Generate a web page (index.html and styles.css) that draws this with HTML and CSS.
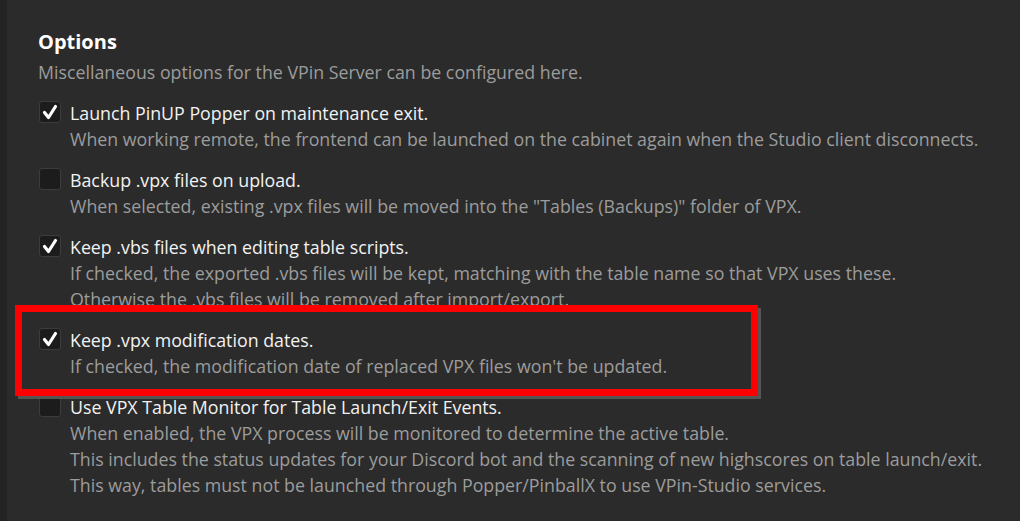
FILE: index.html
```html
<!DOCTYPE html>
<html>
<head>
<meta charset="utf-8">
<link rel="stylesheet" href="styles.css">
</head>
<body>
<div class="page">
  <div class="strip"></div>
  <div class="content">
    <h1 class="title">Options</h1>
    <p class="subtitle">Miscellaneous options for the VPin Server can be configured here.</p>
    <div class="options">
      <div class="option">
        <span class="check checked"><svg viewBox="0 0 22 22" width="22" height="22"><path d="M5.5 11.5 L9.5 16.5 L16.5 5.5" fill="none" stroke="#fff" stroke-width="3.2" stroke-linecap="round" stroke-linejoin="round"/></svg></span>
        <div class="text">
          <div class="label">Launch PinUP Popper on maintenance exit.</div>
          <div class="desc">When working remote, the frontend can be launched on the cabinet again when the Studio client disconnects.</div>
        </div>
      </div>
      <div class="option">
        <span class="check"></span>
        <div class="text">
          <div class="label">Backup .vpx files on upload.</div>
          <div class="desc">When selected, existing .vpx files will be moved into the "Tables (Backups)" folder of VPX.</div>
        </div>
      </div>
      <div class="option">
        <span class="check checked"><svg viewBox="0 0 22 22" width="22" height="22"><path d="M5.5 11.5 L9.5 16.5 L16.5 5.5" fill="none" stroke="#fff" stroke-width="3.2" stroke-linecap="round" stroke-linejoin="round"/></svg></span>
        <div class="text">
          <div class="label">Keep .vbs files when editing table scripts.</div>
          <div class="desc">If checked, the exported .vbs files will be kept, matching with the table name so that VPX uses these.</div>
          <div class="desc">Otherwise the .vbs files will be removed after import/export.</div>
        </div>
      </div>
      <div class="option">
        <span class="check checked"><svg viewBox="0 0 22 22" width="22" height="22"><path d="M5.5 11.5 L9.5 16.5 L16.5 5.5" fill="none" stroke="#fff" stroke-width="3.2" stroke-linecap="round" stroke-linejoin="round"/></svg></span>
        <div class="text">
          <div class="label">Keep .vpx modification dates.</div>
          <div class="desc">If checked, the modification date of replaced VPX files won't be updated.</div>
        </div>
      </div>
      <div class="option">
        <span class="check"></span>
        <div class="text">
          <div class="label">Use VPX Table Monitor for Table Launch/Exit Events.</div>
          <div class="desc">When enabled, the VPX process will be monitored to determine the active table.</div>
          <div class="desc">This includes the status updates for your Discord bot and the scanning of new highscores on table launch/exit.</div>
          <div class="desc">This way, tables must not be launched through Popper/PinballX to use VPin-Studio services.</div>
        </div>
      </div>
    </div>
  </div>
  <div class="highlight"></div>
</div>
</body>
</html>
```

FILE: styles.css
```css
* { box-sizing: border-box; }
html, body { margin: 0; padding: 0; }
body {
  background: #2b2b2b;
  font-family: "Open Sans", "Noto Sans", sans-serif;
  overflow: hidden;
}
.page {
  position: relative;
  display: flex;
  height: 521px;
}
.strip {
  width: 7px;
  background: #232323;
  flex: none;
}
.content {
  padding: 29px 0 0 31px;
}
.title {
  margin: 0;
  font-size: 20px;
  font-weight: 700;
  color: #ffffff;
  line-height: 26px;
}
.subtitle {
  margin: 4px 0 0;
  font-size: 17.8px;
  line-height: 26px;
  color: #9c9c9c;
}
.options {
  margin-top: 15px;
  display: flex;
  flex-direction: column;
  gap: 15px;
}
.option {
  display: flex;
  gap: 9px;
  align-items: flex-start;
}
.check {
  flex: none;
  width: 22px;
  height: 22px;
  margin: 1px 0 0 1px;
  border: 1px solid #3c3c3c;
  border-radius: 3px;
  background: #1c1c1c;
  display: flex;
  align-items: center;
  justify-content: center;
}
.check svg { display: block; margin: -1px; }
.text { font-size: 17.8px; line-height: 26px; }
.label { color: #f2f2f2; }
.desc { color: #9c9c9c; }
.highlight {
  position: absolute;
  left: 15px;
  top: 305px;
  width: 743px;
  height: 91px;
  border: 7px solid #ff0000;
  box-shadow: 3px 3px 0 #555555;
  pointer-events: none;
}
```
